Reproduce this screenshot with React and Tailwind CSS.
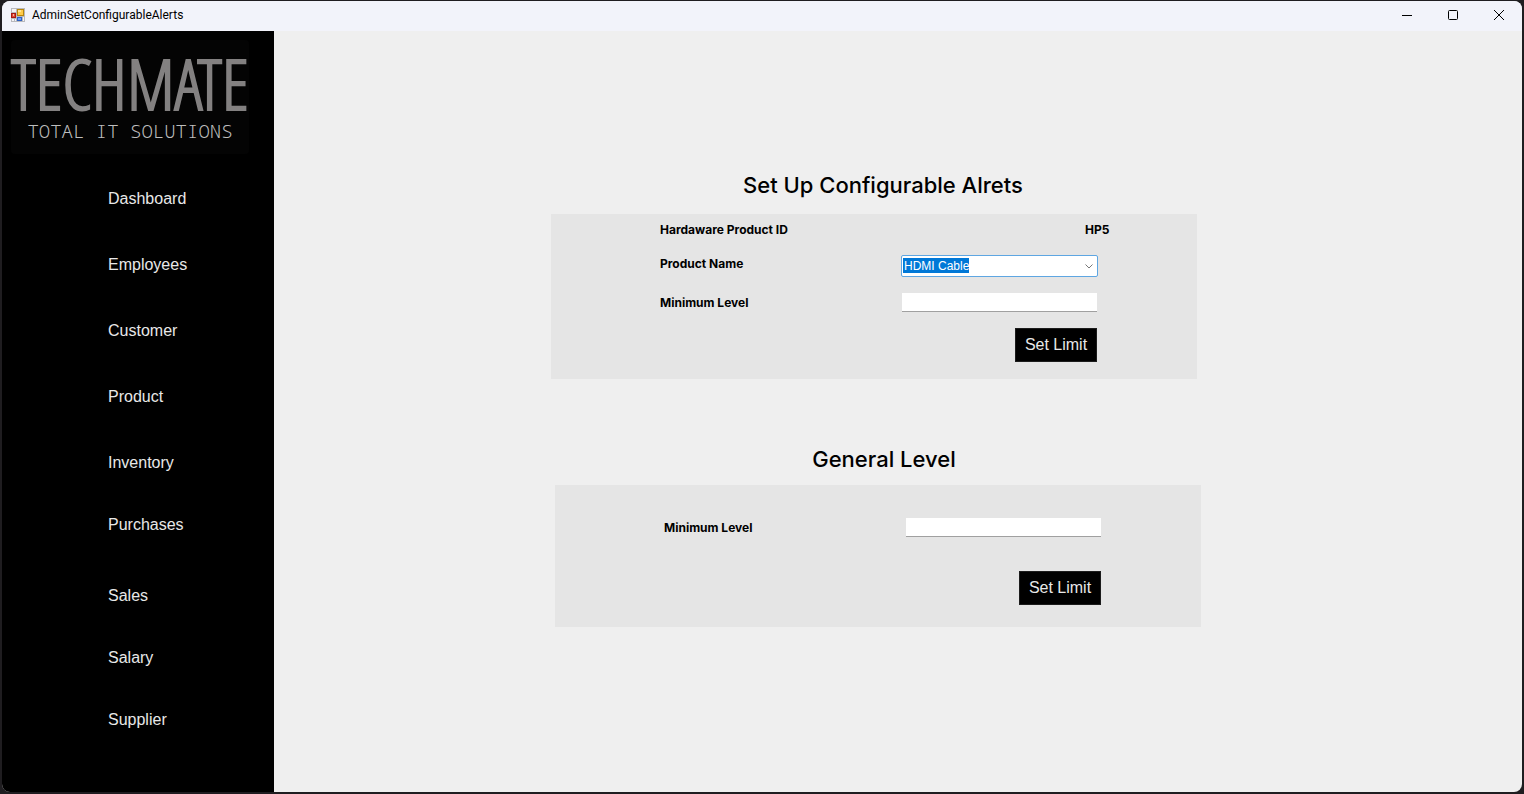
import React from "react";

const navItems = [
  { label: "Dashboard", spacing: "mt-0" },
  { label: "Employees", spacing: "mt-[42px]" },
  { label: "Customer", spacing: "mt-[42px]" },
  { label: "Product", spacing: "mt-[42px]" },
  { label: "Inventory", spacing: "mt-[42px]" },
  { label: "Purchases", spacing: "mt-[38px]" },
  { label: "Sales", spacing: "mt-[47px]" },
  { label: "Salary", spacing: "mt-[38px]" },
  { label: "Supplier", spacing: "mt-[38px]" },
];

function AppIcon() {
  return (
    <svg width="14" height="14" viewBox="0 0 14 14" aria-hidden="true" shapeRendering="crispEdges">
      <rect x="0" y="0" width="14" height="14" fill="#b9b9bd" />
      <rect x="1" y="1" width="4" height="3" fill="#f4f4f6" />
      <rect x="1" y="11" width="2" height="2" fill="#f4f4f6" />
      <rect x="4" y="11" width="1" height="2" fill="#f4f4f6" />
      <rect x="12" y="9" width="1" height="4" fill="#f4f4f6" />
      <rect x="0" y="5" width="5" height="5" fill="#a81a12" />
      <rect x="1" y="6" width="3" height="3" fill="#dc4a36" />
      <rect x="2" y="6" width="1" height="2" fill="#f7b0a0" />
      <rect x="6" y="1" width="7" height="7" fill="#b8860b" />
      <rect x="7" y="2" width="5" height="5" fill="#ffcb4a" />
      <rect x="7" y="2" width="3" height="2" fill="#ffe596" />
      <rect x="6" y="9" width="5" height="4" fill="#2f62c4" />
      <rect x="7" y="10" width="3" height="2" fill="#6fa0f5" />
    </svg>
  );
}

function TitleBar() {
  return (
    <header className="flex h-[30px] shrink-0 items-start justify-between bg-[#f2f3fa] pl-[9px]">
      <div className="flex h-[28px] items-center gap-[7px]">
        <AppIcon />
        <h1 className="font-['Roboto','Open_Sans',sans-serif] text-[12px] leading-4 text-black">
          AdminSetConfigurableAlerts
        </h1>
      </div>
      <div className="flex h-[28px]">
        <button aria-label="Minimize" className="flex w-[46px] items-center justify-center">
          <svg width="10" height="10" viewBox="0 0 10 10" stroke="#000" fill="none">
            <path d="M0 5.5h10" />
          </svg>
        </button>
        <button aria-label="Maximize" className="flex w-[46px] items-center justify-center">
          <svg width="10" height="10" viewBox="0 0 10 10" stroke="#000" fill="none">
            <rect x="0.5" y="0.5" width="9" height="9" rx="1" />
          </svg>
        </button>
        <button aria-label="Close" className="flex w-[46px] items-center justify-center">
          <svg width="10" height="10" viewBox="0 0 10 10" stroke="#000" fill="none">
            <path d="M0 0l10 10M10 0L0 10" />
          </svg>
        </button>
      </div>
    </header>
  );
}

function Sidebar() {
  return (
    <aside className="w-[272px] shrink-0 bg-black pb-8 pt-[9px]">
      <div className="ml-[9px] flex h-[114px] w-[238px] flex-col items-center rounded-sm bg-[#040404] pt-[10px]">
        <p className="whitespace-nowrap font-['Open_Sans_Condensed_Light','Open_Sans_Condensed','Liberation_Sans',sans-serif] text-[70px] leading-[66px] text-[#838181] [-webkit-text-stroke:2px_#838181]">
          TECHMATE
        </p>
        <p className="whitespace-nowrap font-['Noto_Sans_Mono','DejaVu_Sans_Mono',monospace] text-[19px] font-light leading-[30px] text-[#bdbdbd]">
          TOTAL IT SOLUTIONS
        </p>
      </div>
      <nav className="mt-[33px] flex flex-col items-start pl-[106px]">
        {navItems.map(({ label, spacing }) => (
          <a key={label} href="#" className={`${spacing} text-[16px] leading-6 text-[#e8e8e8]`}>
            {label}
          </a>
        ))}
      </nav>
    </aside>
  );
}

function LimitButton() {
  return (
    <button className="h-[34px] w-[82px] border border-[#1c1c1c] bg-black text-[16px] text-[#e8e8e8]">
      Set Limit
    </button>
  );
}

function LevelRow({ id }) {
  return (
    <div className="flex items-end">
      <label htmlFor={id} className="w-[242px] font-['Inter',sans-serif] text-[12px] font-bold leading-[18px]">
        Minimum Level
      </label>
      <input
        id={id}
        type="text"
        className="h-[19px] w-[195px] border-b border-[#a0a0a0] bg-white px-1 text-[12px] outline-none"
      />
    </div>
  );
}

function ProductPanel() {
  return (
    <section>
      <h2 className="mb-[13px] pl-[18px] text-center font-['Inter',sans-serif] text-[22px] font-medium leading-8">
        Set Up Configurable Alrets
      </h2>
      <div className="flex w-[646px] flex-col gap-4 bg-[#e5e5e5] pb-[17px] pl-[109px] pt-[7px]">
        <div className="flex font-['Inter',sans-serif] text-[12px] font-bold leading-[18px]">
          <span className="w-[425px]">Hardaware Product ID</span>
          <span>HP5</span>
        </div>
        <div className="flex items-start">
          <label
            htmlFor="product-name"
            className="w-[241px] font-['Inter',sans-serif] text-[12px] font-bold leading-[18px]"
          >
            Product Name
          </label>
          <div className="grid items-center">
            <select
              id="product-name"
              className="col-start-1 row-start-1 h-[22px] w-[197px] appearance-none rounded-xs border border-[#5ea6e2] bg-white bg-[linear-gradient(#0078d7,#0078d7)] bg-[length:66px_15px] bg-[position:1px_2px] bg-no-repeat pl-[2px] text-[12px] text-white outline-none"
            >
              <option className="bg-white text-black">HDMI Cable</option>
            </select>
            <svg
              className="pointer-events-none col-start-1 row-start-1 mr-[5px] justify-self-end"
              width="8"
              height="5"
              viewBox="0 0 8 5"
              fill="none"
              stroke="#777"
              aria-hidden="true"
            >
              <path d="M0.5 0.5L4 4L7.500 0.5" />
            </svg>
          </div>
        </div>
        <LevelRow id="product-minimum" />
        <div className="flex w-[437px] justify-end">
          <LimitButton />
        </div>
      </div>
    </section>
  );
}

function GeneralPanel() {
  return (
    <section className="self-end">
      <h2 className="mb-[10px] pl-[12px] text-center font-['Inter',sans-serif] text-[22px] font-medium leading-8">
        General Level
      </h2>
      <div className="flex w-[646px] flex-col gap-[34px] bg-[#e5e5e5] pb-[22px] pl-[109px] pt-[33px]">
        <LevelRow id="general-minimum" />
        <div className="flex w-[437px] justify-end">
          <LimitButton />
        </div>
      </div>
    </section>
  );
}

export default function App() {
  return (
    <div className="flex min-h-screen bg-[#1f1d20] pb-0.5 pl-0.5 pr-0.5 pt-px font-['Liberation_Sans',Arial,sans-serif] text-black">
      <div className="flex grow flex-col overflow-hidden rounded-lg bg-[#efefef]">
        <TitleBar />
        <div className="flex grow">
          <Sidebar />
          <main className="flex grow justify-center pr-[44px] pt-[138px]">
            <div className="flex w-[650px] flex-col items-start gap-[64px]">
              <ProductPanel />
              <GeneralPanel />
            </div>
          </main>
        </div>
      </div>
    </div>
  );
}
